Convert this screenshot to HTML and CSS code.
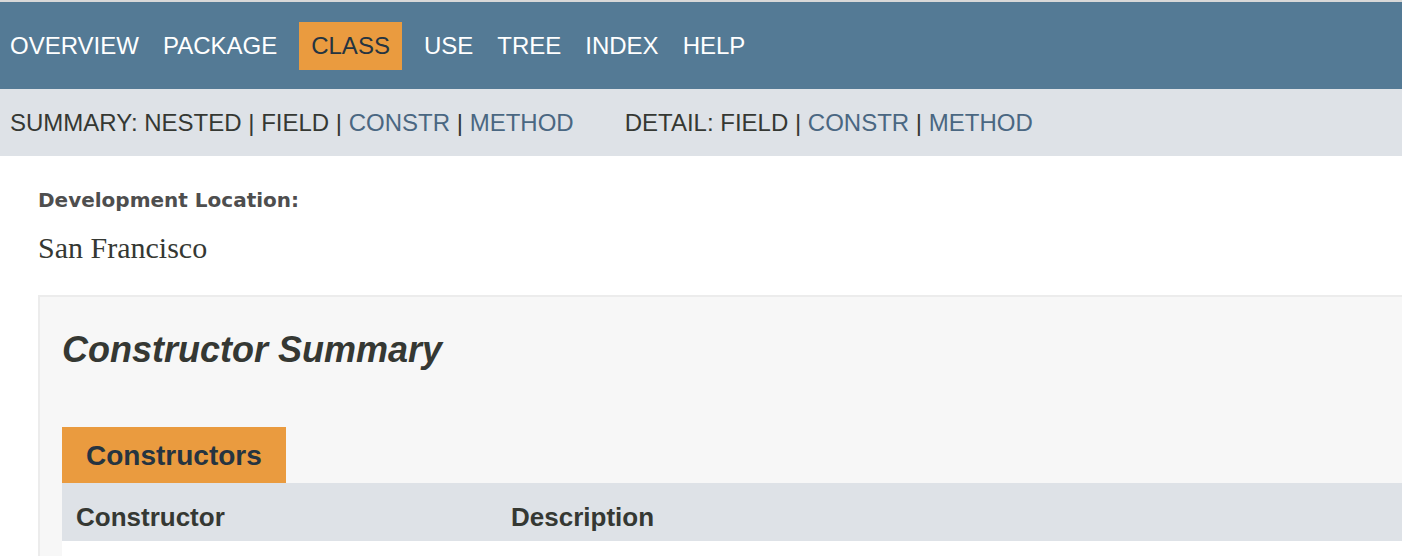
FILE: index.html
```html
<!DOCTYPE html>
<html lang="en">
<head>
<meta charset="utf-8">
<title>Class</title>
<link rel="stylesheet" href="styles.css">
</head>
<body>
<header class="page-header">
  <nav class="top-nav">
    <ul class="nav-list">
      <li>Overview</li>
      <li>Package</li>
      <li class="nav-current">Class</li>
      <li>Use</li>
      <li>Tree</li>
      <li>Index</li>
      <li>Help</li>
    </ul>
  </nav>
  <div class="sub-nav">
    <ul class="sub-nav-list">
      <li>Summary:&nbsp;</li>
      <li>Nested&nbsp;|&nbsp;</li>
      <li>Field&nbsp;|&nbsp;</li>
      <li><a class="link">Constr</a>&nbsp;|&nbsp;</li>
      <li><a class="link">Method</a></li>
    </ul>
    <ul class="sub-nav-list">
      <li>Detail:&nbsp;</li>
      <li>Field&nbsp;|&nbsp;</li>
      <li><a class="link">Constr</a>&nbsp;|&nbsp;</li>
      <li><a class="link">Method</a></li>
    </ul>
  </div>
</header>
<main class="content">
  <dl class="notes">
    <dt>Development Location:</dt>
    <dd>San Francisco</dd>
  </dl>
  <section class="summary-block">
    <h3 class="summary-title">Constructor Summary</h3>
    <table class="summary-table">
      <caption><span>Constructors</span></caption>
      <thead>
        <tr><th class="col-first">Constructor</th><th class="col-last">Description</th></tr>
      </thead>
      <tbody>
        <tr class="row-white"><td class="col-first"></td><td class="col-last"></td></tr>
      </tbody>
    </table>
  </section>
</main>
</body>
</html>
```
FILE: styles.css
```css
html, body {
  margin: 0;
  padding: 0;
  background: #ffffff;
  overflow: hidden;
}
body {
  font-family: "Liberation Sans", Arial, sans-serif;
  color: #353833;
}
.page-header {
  border-top: 2px solid #d8d8d8;
}
.top-nav {
  background: #547a95;
  height: 67px;
  padding-top: 20px;
}
.nav-list {
  display: flex;
  margin: 0 0 0 -2px;
  padding: 0;
  list-style: none;
}
.nav-list li {
  padding: 10px 12px;
  font-size: 24px;
  line-height: 28px;
  color: #ffffff;
  text-transform: uppercase;
}
.nav-list li.nav-current {
  background: #ea9b3f;
  color: #253441;
  margin: 0 10px;
}
.sub-nav {
  display: flex;
  background: #dee2e7;
  padding: 20px 0 20px 10px;
}
.sub-nav-list {
  display: flex;
  margin: 0 51px 0 0;
  padding: 0;
  list-style: none;
  font-size: 24px;
  line-height: 27px;
  color: #353833;
  text-transform: uppercase;
  white-space: nowrap;
}
.link {
  color: #4a6782;
}
.content {
  padding: 0 0 0 38px;
}
.notes {
  margin: 30px 0 0 0;
}
.notes dt {
  font-family: "DejaVu Sans", "Liberation Sans", sans-serif;
  font-weight: bold;
  font-size: 20px;
  line-height: 28px;
  color: #4e4e4e;
}
.notes dd {
  margin: 14px 0 0 0;
  font-family: "Liberation Serif", "Times New Roman", serif;
  font-size: 30px;
  line-height: 40px;
  color: #353833;
}
.summary-block {
  margin-top: 27px;
  border: 2px solid #ececec;
  border-right: none;
  background: #f7f7f7;
  padding: 0 0 0 22px;
}
.summary-title {
  margin: 32px 0 56px 0;
  font-size: 36px;
  line-height: 42px;
  font-weight: bold;
  font-style: italic;
  color: #353833;
}
.summary-table {
  width: 100%;
  border-spacing: 0;
  border-collapse: separate;
}
.summary-table caption {
  text-align: left;
  padding: 0;
}
.summary-table caption span {
  display: inline-block;
  background: #ea9b3f;
  color: #253441;
  font-weight: bold;
  font-size: 28px;
  line-height: 32px;
  padding: 13px 24px 11px 24px;
  white-space: nowrap;
}
.summary-table th {
  background: #dee2e7;
  color: #353833;
  font-size: 26px;
  font-weight: bold;
  line-height: 36px;
  text-align: left;
  padding: 16px 6px 6px 14px;
}
.summary-table th.col-first {
  width: 415px;
}
.row-white td {
  background: #ffffff;
  height: 60px;
  padding: 0;
}
```
